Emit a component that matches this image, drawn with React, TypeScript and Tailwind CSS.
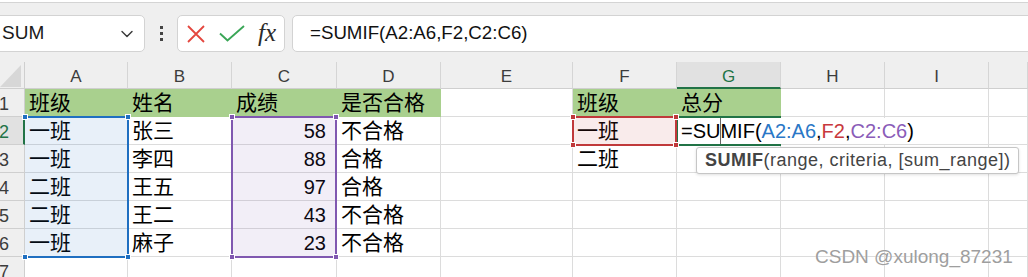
import React from 'react';
import { ChevronDown } from 'lucide-react';

// last column is only partly on screen, its letter sits past the right edge
const COLS = ['A', 'B', 'C', 'D', 'E', 'F', 'G', 'H', 'I', ''];

const DATA: string[][] = [
  ['班级', '姓名', '成绩', '是否合格', '', '班级', '总分', '', '', ''],
  ['一班', '张三', '58', '不合格', '', '一班', '', '', '', ''],
  ['一班', '李四', '88', '合格', '', '二班', '', '', '', ''],
  ['二班', '王五', '97', '合格', '', '', '', '', '', ''],
  ['二班', '王二', '43', '不合格', '', '', '', '', '', ''],
  ['一班', '麻子', '23', '不合格', '', '', '', '', '', ''],
  ['', '', '', '', '', '', '', '', '', ''],
];

const GREEN_COLS = [0, 1, 2, 3, 5, 6];

const GRID =
  'grid grid-cols-[25px_103px_104px_105px_104px_132px_104px_104px_104px_104px_1fr] grid-rows-[27px_repeat(7,28px)]';

const Handle = ({ className }: { className: string }) => (
  <div className={`absolute w-[6px] h-[6px] border border-white ${className}`} />
);

const Toolbar = () => (
  <div className="h-[60px] border-t border-[#d4d4d4] bg-[#efefef] pt-[12px] flex items-start">
    {/* Name box */}
    <div className="-ml-[6px] w-[151px] h-[37px] bg-white border border-[#d3d3d3] rounded-[5px] flex items-center pl-[7px] pr-[7px]">
      <span className="text-[19px] text-[#1a1a1a] flex-1">SUM</span>
      <ChevronDown size={20} strokeWidth={1.7} className="text-[#3a3a3a]" />
    </div>

    {/* More */}
    <div className="w-[32px] h-[37px] flex flex-col items-center justify-center gap-[3px]">
      <div className="w-[3px] h-[3px] bg-[#444]" />
      <div className="w-[3px] h-[3px] bg-[#444]" />
      <div className="w-[3px] h-[3px] bg-[#444]" />
    </div>

    {/* Cancel / enter / fx */}
    <div className="w-[108px] h-[37px] bg-white border border-[#d3d3d3] rounded-[5px] flex items-center pl-[9px]">
      <svg width="18" height="18" viewBox="0 0 18 18">
        <path d="M1 1 L17 17 M17 1 L1 17" stroke="#e4463e" strokeWidth="1.8" fill="none" />
      </svg>
      <svg width="26" height="17" viewBox="0 0 26 17" className="ml-[14px]">
        <polyline points="1,8.5 8.5,15.5 25,1" stroke="#3aa657" strokeWidth="1.9" fill="none" />
      </svg>
      <span className="ml-[13px] font-['Liberation_Serif',serif] italic text-[25px] leading-none text-[#2b2b2b] -mt-[2px]">
        fx
      </span>
    </div>

    {/* Formula bar */}
    <div className="ml-[7px] flex-1 -mr-[10px] h-[37px] bg-white border border-[#d3d3d3] rounded-[5px] flex items-center pl-[17px]">
      <span className="text-[18.7px] text-[#111]">=SUMIF(A2:A6,F2,C2:C6)</span>
    </div>
  </div>
);

export default function App() {
  return (
    <div className="relative w-[1028px] h-[277px] overflow-hidden bg-white pt-[2px] font-['Liberation_Sans','Noto_Sans_CJK_SC',sans-serif]">
      <Toolbar />

      <div className="relative">
        {/* Base sheet */}
        <div className={GRID}>
          {/* Corner */}
          <div className="bg-[#efefef] border-r border-b border-[#cfcfcf] relative">
            <svg width="24" height="26" viewBox="0 0 24 26" className="absolute left-0 top-0">
              <polygon points="21,3 21,25 0,25" fill="#d7d7d7" />
            </svg>
          </div>
          {COLS.map((c, i) => (
            <div
              key={i}
              className={
                c === 'G'
                  ? 'bg-[#e1e1e1] border-r border-[#d5d5d5] border-b-2 border-b-[#217346] flex items-center justify-center pt-[4px] text-[17px] text-[#217346]'
                  : 'bg-[#efefef] border-r border-[#d5d5d5] border-b border-b-[#cfcfcf] flex items-center justify-center pt-[3px] text-[17px] text-[#3c3c3c]'
              }
            >
              {c}
            </div>
          ))}

          {DATA.map((row, r) => (
            <React.Fragment key={r}>
              <div
                className={
                  r === 1
                    ? 'bg-[#e1e1e1] border-r-2 border-r-[#217346] border-b border-b-[#cfcfcf] flex items-center pt-[3px] text-[18px] text-[#217346]'
                    : 'bg-[#efefef] border-r border-b border-[#cfcfcf] flex items-center pt-[3px] text-[18px] text-[#3c3c3c]'
                }
              >
                <span className="-ml-[1px]">{r + 1}</span>
              </div>
              {row.map((v, c) => {
                const green = r === 0 && GREEN_COLS.includes(c);
                const num = /^\d+$/.test(v);
                return (
                  <div
                    key={c}
                    className={`flex items-center whitespace-nowrap border-r border-b text-black ${
                      green ? 'bg-[#a9d08e] border-[#a9d08e]' : 'bg-white border-[#dcdcdc]'
                    } ${num ? 'justify-end pr-[10px] text-[20px]' : 'pl-[4px] text-[21px]'}`}
                  >
                    {v}
                  </div>
                );
              })}
            </React.Fragment>
          ))}
        </div>

        {/* Selection overlays */}
        <div className={`${GRID} absolute inset-0 pointer-events-none`}>
          {/* A2:A6 */}
          <div className="relative col-start-2 row-start-3 row-span-5 -mt-px -mr-px -mb-px border-2 border-l-0 border-[#1f6fc1] bg-[#1f6fc1]/10">
            <Handle className="bg-[#1f6fc1] -left-[3px] -top-[4px]" />
            <Handle className="bg-[#1f6fc1] -right-[4px] -top-[4px]" />
            <Handle className="bg-[#1f6fc1] -left-[3px] -bottom-[4px]" />
            <Handle className="bg-[#1f6fc1] -right-[4px] -bottom-[4px]" />
          </div>

          {/* C2:C6 */}
          <div className="relative col-start-4 row-start-3 row-span-5 -mt-px -ml-px -mb-px border-2 border-[#8058b0] bg-[#8058b0]/10">
            <Handle className="bg-[#8058b0] -left-[4px] -top-[4px]" />
            <Handle className="bg-[#8058b0] -right-[4px] -top-[4px]" />
            <Handle className="bg-[#8058b0] -left-[4px] -bottom-[4px]" />
            <Handle className="bg-[#8058b0] -right-[4px] -bottom-[4px]" />
          </div>

          {/* F2 */}
          <div className="relative col-start-7 row-start-3 -mt-px -ml-px -mb-px border-2 border-[#c0393b] bg-[#c0393b]/10">
            <Handle className="bg-[#c0393b] -left-[4px] -top-[4px]" />
            <Handle className="bg-[#c0393b] -right-[4px] -top-[4px]" />
            <Handle className="bg-[#c0393b] -left-[4px] -bottom-[4px]" />
            <Handle className="bg-[#c0393b] -right-[4px] -bottom-[4px]" />
          </div>

          {/* G2 in-cell editor */}
          <div className="relative col-start-8 col-span-3 row-start-3 justify-self-start my-[1px] ml-[1px] bg-white flex items-center pl-[3px] pr-[4px] text-[20px] whitespace-nowrap text-black">
            <span>=SUMIF(</span>
            <span className="text-[#2a77c6]">A2:A6</span>
            <span>,</span>
            <span className="text-[#c8383d]">F2</span>
            <span>,</span>
            <span className="text-[#8a5cb8]">C2:C6</span>
            <span>)</span>
            <div className="absolute left-[42px] top-0 bottom-0 w-px bg-[#666]" />
          </div>
          <div className="col-start-8 row-start-3 -mt-px -ml-px -mb-px border-2 border-r-0 border-[#217346]" />

          {/* Function tooltip */}
          <div className="absolute left-[696px] top-[85px] w-[323px] h-[27px] bg-white border border-[#c6c6c6] rounded-[3px] shadow-[0_1px_3px_rgba(0,0,0,0.12)] flex items-center pl-[8px] text-[18px] tracking-[0.5px] text-[#444] whitespace-nowrap">
            <span className="font-bold">SUMIF</span>
            <span>(range, criteria, [sum_range])</span>
          </div>
        </div>
      </div>

      {/* Watermark */}
      <div className="absolute left-[815px] top-[247px] text-[19px] leading-[19px] text-[#9e9e9e] whitespace-nowrap [text-shadow:0_0_1px_#fff]">
        CSDN @xulong_87231
      </div>
    </div>
  );
}
